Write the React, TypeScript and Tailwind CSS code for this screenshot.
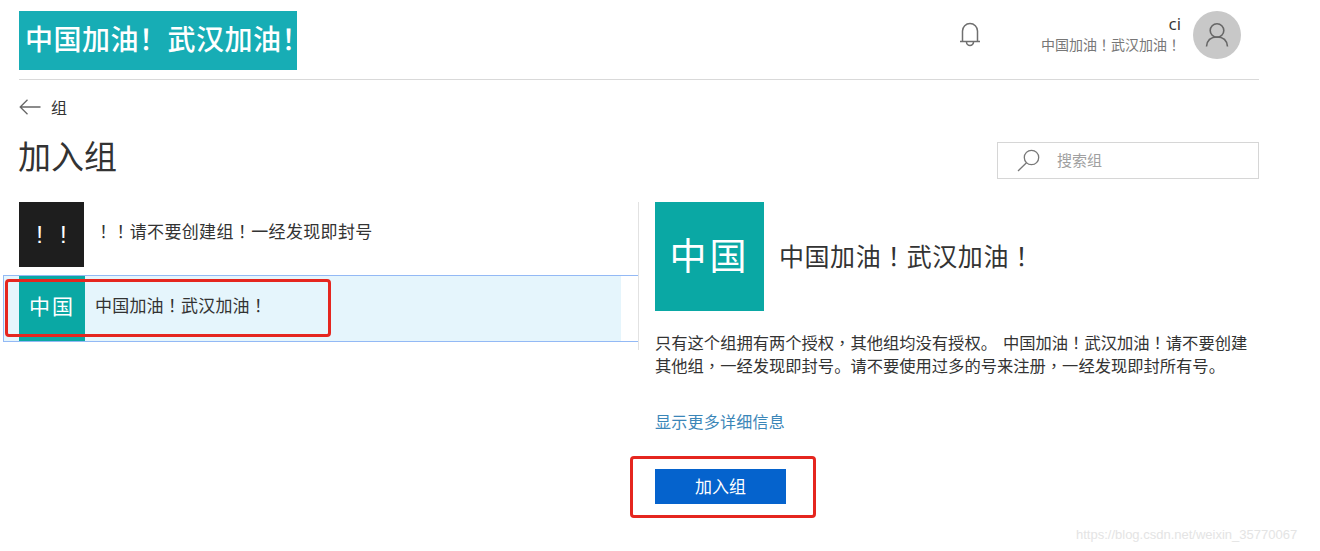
import React from "react";

const BANG = "\uFF01";
const COMMA = "\uFF0C";
const B = () => <span className="font-['Noto_Sans_CJK_TC']">{BANG}</span>;
const C = () => <span className="font-['Noto_Sans_CJK_TC']">{COMMA}</span>;

function Bell() {
  return (
    <svg width="24" height="26" viewBox="0 0 24 26" fill="none" stroke="#6f6f6f" strokeWidth="1.5">
      <path d="M2 20.5h20M4.5 20.5V10a7.5 7.5 0 0 1 15 0v10.5" />
      <path d="M8.5 21a3.5 3.5 0 0 0 7 0" />
    </svg>
  );
}

function User() {
  return (
    <svg width="24" height="26" viewBox="0 0 24 26" fill="none" stroke="#666666" strokeWidth="1.6">
      <circle cx="12" cy="8.5" r="6.8" />
      <path d="M1.5 24.5c.5-6 4.500-9.500 10.500-9.500s10 3.500 10.500 9.500" />
    </svg>
  );
}

function Search() {
  return (
    <svg width="24" height="24" viewBox="0 0 24 24" fill="none" stroke="#777777" strokeWidth="1.3">
      <circle cx="14.500" cy="8.500" r="7.200" />
      <path d="M9.500 13.800 1 22" />
    </svg>
  );
}

function Arrow() {
  return (
    <svg width="22" height="16" viewBox="0 0 22 16" fill="none" stroke="#666666" strokeWidth="1.300">
      <path d="M21.500 8H1M8.500 .8 1.200 8l7.300 7.200" />
    </svg>
  );
}

export default function App() {
  return (
    <div className="relative w-[1320px] h-[551px] overflow-hidden bg-white text-[#333333] font-['Noto_Sans_CJK_SC','Liberation_Sans',sans-serif]">
      <header className="ml-[19px] w-[1240px] h-[80px] pt-[11px] border-b border-[#d9d9d9] flex items-start">
        <div className="w-[278px] h-[59px] bg-[#17adb5] text-white text-[28px] font-medium leading-[55px] pl-[6px] tracking-[0.5px] whitespace-nowrap">
          中国加油{BANG}武汉加油{BANG}
        </div>
        <div className="ml-auto mr-[18px] flex items-start">
          <div className="mt-[10px] mr-[59px]"><Bell /></div>
          <div className="flex flex-col items-end mr-[12px] mt-[3px]">
            <span className="text-[17px] leading-[20px] text-[#333333] font-['Open_Sans',sans-serif]">ci</span>
            <span className="text-[14px] leading-[21px] text-[#777777]">中国加油<B />武汉加油<B /></span>
          </div>
          <div className="w-[48px] h-[48px] rounded-full bg-[#c8c8c8] flex items-center justify-center"><User /></div>
        </div>
      </header>

      <div className="ml-[19px] mt-[17px] h-[20px] flex items-center gap-[10px] text-[16px] text-[#333333]">
        <Arrow />
        <span>组</span>
      </div>

      <div className="ml-[18px] mr-[61px] mt-[16px] h-[44px] flex items-start justify-between">
        <h1 className="text-[33px] leading-[44px] text-[#333333]">加入组</h1>
        <div className="mt-[9px] w-[262px] h-[37px] border border-[#d6d6d6] flex items-center pl-[19px] gap-[16px]">
          <Search />
          <span className="text-[15px] text-[#a0a0a0]">搜索组</span>
        </div>
      </div>

      <main className="mt-[25px] flex items-start">
        <section className="w-[639px] pl-[3px] shrink-0">
          <div className="ml-[16px] h-[65px] flex items-center">
            <div className="w-[65px] h-[65px] bg-[#1e1e1e] text-white text-[24px] flex items-center justify-center gap-[17px] font-['Liberation_Sans',sans-serif]">
              <span>!</span><span>!</span>
            </div>
            <span className="ml-[11px] -mt-[8px] text-[17px] tracking-[0.35px] text-[#333333]"><B /><B />请不要创建组<B />一经发现即封号</span>
          </div>
          <div className="mt-[8px] h-[67px] border border-[#93b9f5] bg-white flex">
            <div className="w-[617px] bg-[#e5f5fc] flex items-stretch pl-[15px]">
              <div className="w-[66px] bg-[#0aa8a4] text-white text-[21px] tracking-[2px] pb-[5px] flex items-center justify-center">中国</div>
              <span className="ml-[10px] -mt-[8px] self-center text-[17px] tracking-[0.2px] text-[#333333]">中国加油<B />武汉加油<B /></span>
            </div>
          </div>
        </section>

        <div className="-ml-[1px] h-[148px] w-[1px] bg-[#e2e2e2] shrink-0" />

        <section className="ml-[16px] w-[600px]">
          <div className="flex items-center">
            <div className="w-[109px] h-[109px] bg-[#0aa8a4] text-white text-[37px] tracking-[3px] pb-[4px] flex items-center justify-center">中国</div>
            <span className="ml-[15px] -mt-[2px] text-[25px] tracking-[0.55px] text-[#333333]">中国加油<B />武汉加油<B /></span>
          </div>
          <p className="mt-[20px] text-[16.3px] leading-[23px] text-[#333333] w-[600px]">
            只有这个组拥有两个授权<C />其他组均没有授权。<span className="inline-block w-[6px]" />中国加油<B />武汉加油<B />请不要创建其他组<C />一经发现即封号。请不要使用过多的号来注册<C />一经发现即封所有号。
          </p>
          <a className="block mt-[32px] text-[16px] leading-[24px] tracking-[0.25px] text-[#3b86b8]">显示更多详细信息</a>
          <button className="block mt-[36px] w-[131px] h-[35px] bg-[#0563cd] text-white text-[17px] pb-[2px]">加入组</button>
        </section>
      </main>

      <div className="absolute left-[5px] top-[279px] w-[326px] h-[58px] border-[3px] border-[#e5261f] rounded-[4px]" />
      <div className="absolute left-[630px] top-[456px] w-[186px] h-[62px] border-[3px] border-[#e5261f] rounded-[4px]" />
      <div className="absolute left-[1076px] top-[526px] text-[13px] leading-[18px] text-[#e4e4e4] whitespace-nowrap font-['Liberation_Sans',sans-serif]">https://blog.csdn.net/weixin_35770067</div>
    </div>
  );
}
